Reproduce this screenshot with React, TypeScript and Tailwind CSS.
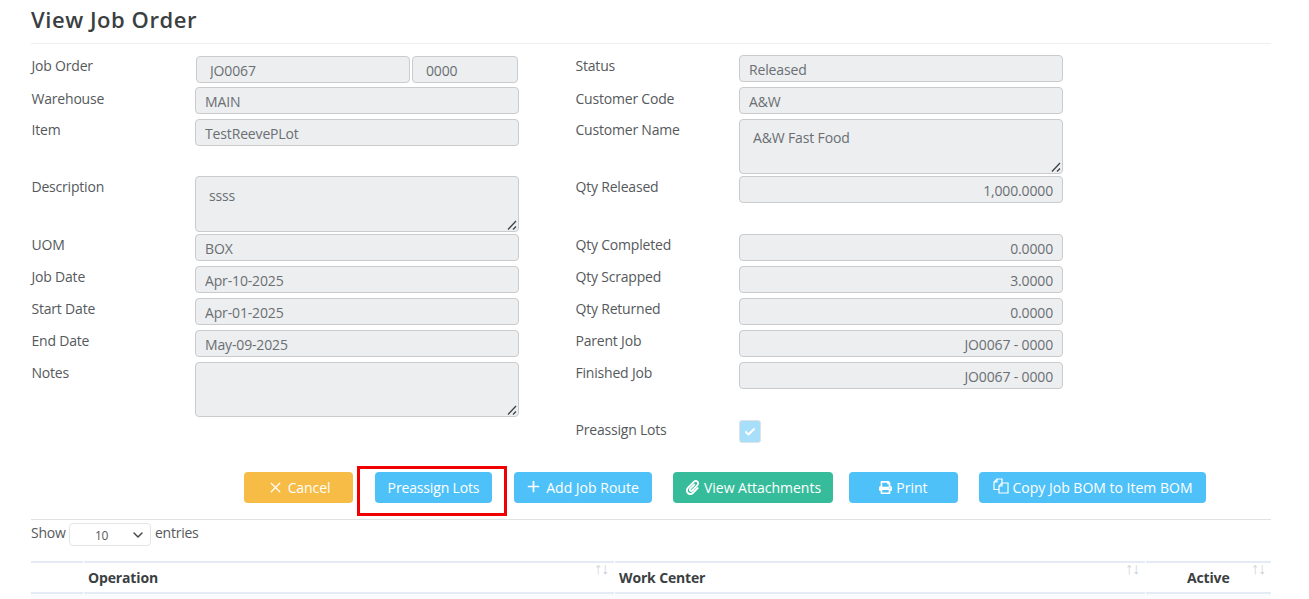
import { X, Plus, ChevronDown, Check } from 'lucide-react';
import { FaPaperclip, FaPrint } from 'react-icons/fa';

const fieldClass = 'block rounded-[4px] border border-[#c9cbcd] bg-[#eceef0] text-[14px] tracking-[-0.15px] text-[#6b6f73] outline-none';

function Field({ value, right, className = '' }: { value: string; right?: boolean; className?: string }) {
  return (
    <input
      readOnly
      value={value}
      className={`${fieldClass} h-[27px] px-[9px] pt-[1px] ${right ? 'text-right' : ''} ${className}`}
    />
  );
}

function Area({ value, className = '' }: { value?: string; className?: string }) {
  return (
    <div className="relative">
      <textarea
        readOnly
        defaultValue={value}
        className={`${fieldClass} block w-[324px] resize-none px-[13px] pb-[8px] leading-[20px] ${className}`}
      />
      <svg width="10" height="10" viewBox="0 0 10 10" className="absolute bottom-[2px] right-[2px] text-[#3f4244]">
        <path d="M1 9.5 L9 1 M6 9.5 L9 6.5" stroke="currentColor" strokeWidth="1.3" fill="none" />
      </svg>
    </div>
  );
}

function Row({ label, mb, labelClass = '', children }: { label: string; mb: string; labelClass?: string; children: React.ReactNode }) {
  return (
    <div className={`flex items-start ${mb}`}>
      <label className={`w-[164px] pl-[0.5px] text-[14px] leading-[22px] tracking-[-0.2px] text-[#55595c] ${labelClass}`}>{label}</label>
      {children}
    </div>
  );
}

function Btn({ color, className = '', children }: { color: string; className?: string; children: React.ReactNode }) {
  return (
    <button className={`flex h-[31px] items-center justify-center gap-[4px] rounded-[4px] text-[14px] text-white ${color} ${className}`}>
      {children}
    </button>
  );
}

function CopyIcon() {
  return (
    <svg width="16" height="16" viewBox="0 0 16 16" fill="none" stroke="currentColor" strokeWidth="1.2" className="mt-[-3px]">
      <path d="M6 11.5 H1 V4 L4 1 H9 V5" />
      <path d="M4 1 V4 H1" />
      <path d="M6 15 V8 L9 5 H15 V15 Z" />
      <path d="M9 5 V8 H6" />
    </svg>
  );
}

function SortIcon() {
  return <span className="absolute right-[6px] top-[-4px] text-[16px] font-normal leading-[18px] tracking-[-1px] text-[#cfd2d5]">↑↓</span>;
}

const headCell = 'relative border-y-2 border-[#e4ebf4]';

export default function App() {
  return (
    <div className="h-[599px] w-[1309px] overflow-hidden bg-white pl-[31px] pr-[38px] font-['Open_Sans','Noto_Sans',sans-serif]">
      <div className="h-[44px] border-b border-[#eeeff0]">
        <h1 className="pt-[4px] text-[22px] font-semibold leading-[30px] tracking-[0.55px] text-[#3b3f42]">View Job Order</h1>
      </div>

      <div className="flex items-start pt-[11px]">
        <div className="w-[488px] pt-[1px]">
          <Row label="Job Order" mb="mb-[4px]" labelClass="mt-[-1px]">
            <div className="flex gap-[2px] pl-[1px]">
              <Field value="JO0067" className="w-[214px] pl-[13px]" />
              <Field value="0000" className="w-[106px] pl-[13px]" />
            </div>
          </Row>
          <Row label="Warehouse" mb="mb-[5px]" labelClass="pt-[1px]"><Field value="MAIN" className="w-[324px]" /></Row>
          <Row label="Item" mb="mb-[30px]"><Field value="TestReevePLot" className="w-[324px]" /></Row>
          <Row label="Description" mb="mb-[2px]"><Area value="ssss" className="h-[56px] pt-[9px]" /></Row>
          <Row label="UOM" mb="mb-[5px]"><Field value="BOX" className="w-[324px]" /></Row>
          <Row label="Job Date" mb="mb-[5px]"><Field value="Apr-10-2025" className="w-[324px]" /></Row>
          <Row label="Start Date" mb="mb-[5px]"><Field value="Apr-01-2025" className="w-[324px]" /></Row>
          <Row label="End Date" mb="mb-[5px]"><Field value="May-09-2025" className="w-[324px]" /></Row>
          <Row label="Notes" mb="mb-0"><Area className="h-[55px]" /></Row>
        </div>

        <div className="ml-[56px] w-[488px]">
          <Row label="Status" mb="mb-[5px]"><Field value="Released" className="w-[324px]" /></Row>
          <Row label="Customer Code" mb="mb-[5px]" labelClass="pt-[1px]"><Field value="A&W" className="w-[324px]" /></Row>
          <Row label="Customer Name" mb="mb-[2px]"><Area value="A&W Fast Food" className="h-[55px] pt-[8px]" /></Row>
          <Row label="Qty Released" mb="mb-[31px]"><Field value="1,000.0000" right className="w-[324px]" /></Row>
          <Row label="Qty Completed" mb="mb-[5px]"><Field value="0.0000" right className="w-[324px]" /></Row>
          <Row label="Qty Scrapped" mb="mb-[5px]"><Field value="3.0000" right className="w-[324px]" /></Row>
          <Row label="Qty Returned" mb="mb-[5px]"><Field value="0.0000" right className="w-[324px]" /></Row>
          <Row label="Parent Job" mb="mb-[5px]"><Field value="JO0067 - 0000" right className="w-[324px]" /></Row>
          <Row label="Finished Job" mb="mb-[31px]"><Field value="JO0067 - 0000" right className="w-[324px]" /></Row>
          <div className="flex items-start">
            <label className="w-[164px] pl-[0.5px] text-[14px] leading-[20px] tracking-[-0.2px] text-[#55595c]">Preassign Lots</label>
            <span className="flex h-[23px] w-[22px] items-center justify-center rounded-[3px] border border-[#dfe3e6] bg-[#a7dffb]">
              <Check size={12} strokeWidth={4} className="text-white" />
            </span>
          </div>
        </div>
      </div>

      <div className="ml-[213px] mt-[29px] flex items-start">
        <Btn color="bg-[#f6bc45]" className="w-[109px] tracking-[-0.1px]"><X size={17} strokeWidth={1.8} />Cancel</Btn>
        <div className="relative ml-[22px]">
          <Btn color="bg-[#4fc1f9]" className="w-[117px] tracking-[-0.15px]">Preassign Lots</Btn>
          <div className="absolute bottom-[-13px] left-[-18px] right-[-15px] top-[-6px] border-[3px] border-[#f00000]" />
        </div>
        <Btn color="bg-[#4fc1f9]" className="ml-[22px] w-[138px] pr-[2px]"><Plus size={17} strokeWidth={2.4} className="mt-[-2px]" />Add Job Route</Btn>
        <Btn color="bg-[#37bc9b]" className="ml-[21px] w-[160px]"><FaPaperclip size={15} />View Attachments</Btn>
        <Btn color="bg-[#4fc1f9]" className="ml-[16px] w-[109px]"><FaPrint size={13} />Print</Btn>
        <Btn color="bg-[#4fc1f9]" className="ml-[21px] w-[227px]"><CopyIcon />Copy Job BOM to Item BOM</Btn>
      </div>

      <div className="mt-[16px] h-[1px] bg-[#dfe1e3]" />

      <div className="mt-[3px] flex items-start text-[14px] leading-[20px] tracking-[-0.25px] text-[#55595c]">
        <span className="w-[38px]">Show</span>
        <div className="relative h-[23px] w-[82px]">
          <select className="h-full w-full appearance-none rounded-[4px] border border-[#e3e5e7] bg-white pl-[25px] pt-[2px] text-[12px] text-[#55595c] outline-none">
            <option>10</option>
          </select>
          <ChevronDown size={16} strokeWidth={2.2} className="absolute right-[5px] top-[4px] text-[#44484b]" />
        </div>
        <span className="ml-[4px]">entries</span>
      </div>

      <div className="mt-[15px] flex h-[33px] gap-[1px] text-[14px] font-bold leading-[30px] tracking-[-0.15px] text-[#3b3f42]">
        <div className={`${headCell} w-[52px]`} />
        <div className={`${headCell} w-[530px] pl-[4px]`}>Operation<SortIcon /></div>
        <div className={`${headCell} w-[530px] pl-[4px]`}>Work Center<SortIcon /></div>
        <div className={`${headCell} flex-1 pl-[41px]`}>Active<SortIcon /></div>
      </div>
      <div className="h-[8px] bg-[#f9fbfd]" />
    </div>
  );
}
